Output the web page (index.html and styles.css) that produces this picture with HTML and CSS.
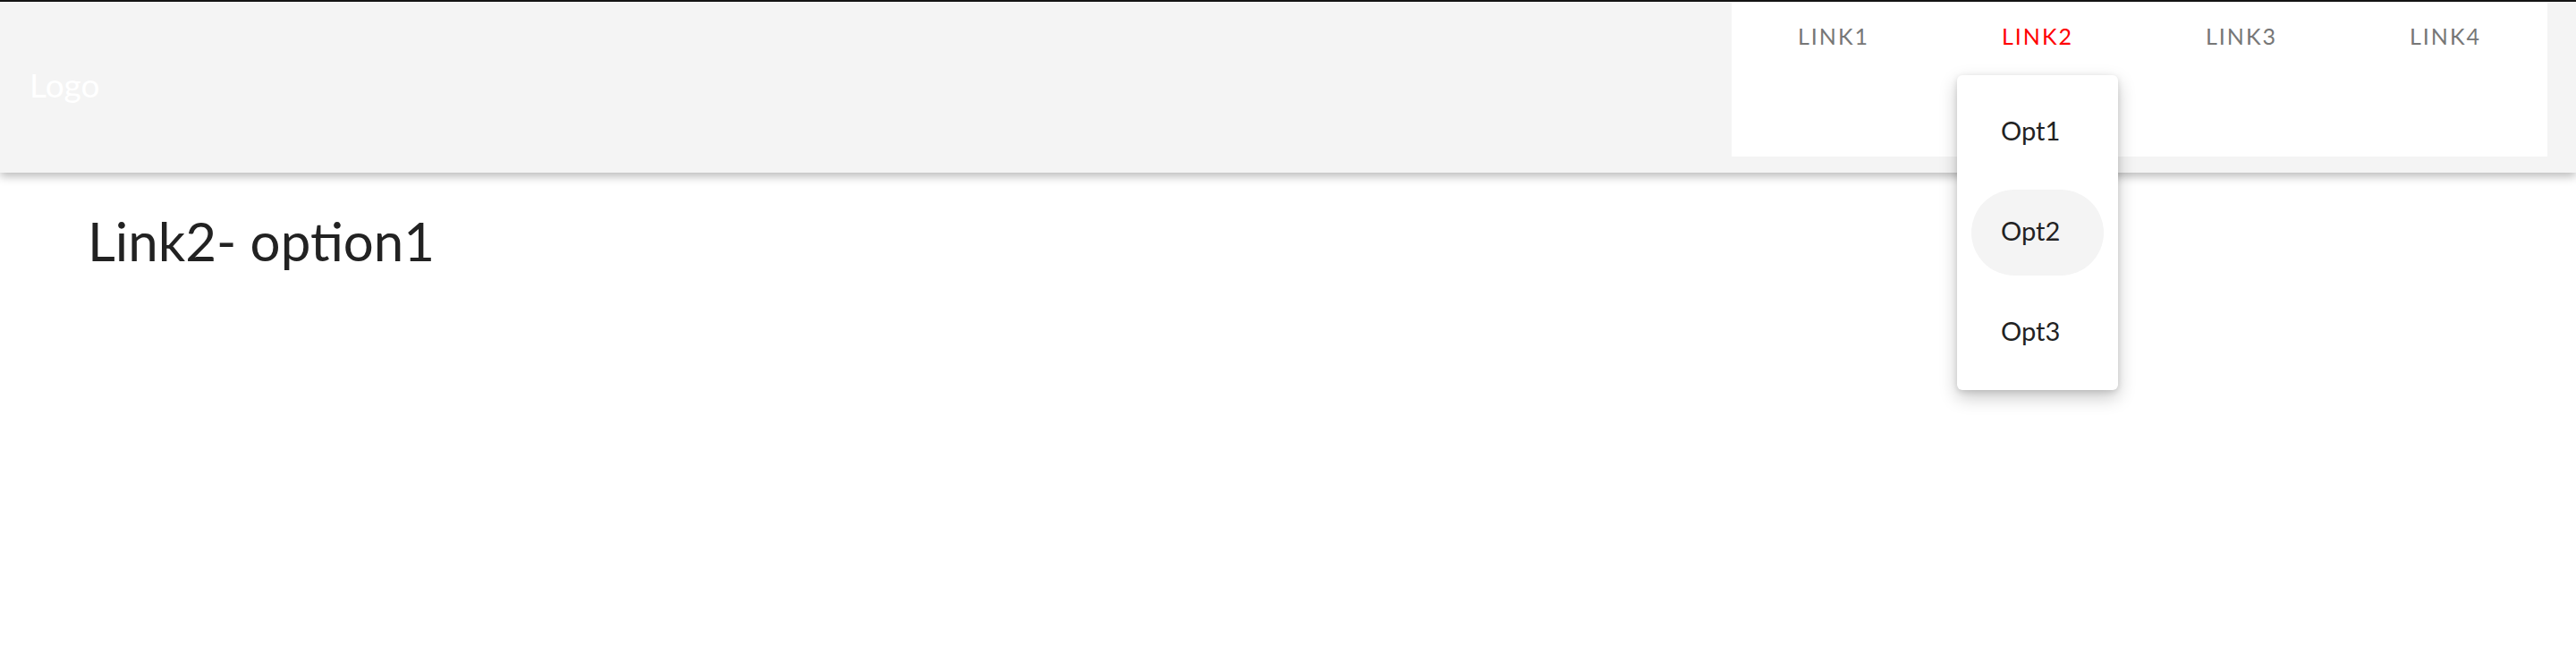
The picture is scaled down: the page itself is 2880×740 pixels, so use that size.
FILE: index.html
```html
<!DOCTYPE html>
<html lang="en">
<head>
    <meta charset="UTF-8">
    <meta name="viewport" content="width=device-width, initial-scale=1.0">
    <title>Navbar</title>
    <link rel="stylesheet" href="styles.css">
</head>
<body>
    <div class="header">
        <div class="logo">Logo</div>
        <div class="nav">
            <div class="nav-item"><span class="nav-link">Link1</span></div>
            <div class="nav-item open">
                <span class="nav-link active">Link2</span>
                <!-- dropdown for link2 -->
                <div class="menu">
                    <div class="menu-item"><span class="menu-pill">Opt1</span></div>
                    <div class="menu-item"><span class="menu-pill hovered">Opt2</span></div>
                    <div class="menu-item"><span class="menu-pill">Opt3</span></div>
                </div>
            </div>
            <div class="nav-item"><span class="nav-link">Link3</span></div>
            <div class="nav-item"><span class="nav-link">Link4</span></div>
        </div>
    </div>
    <div class="content">
        <h1 class="page-title">Link2- option1</h1>
    </div>
</body>
</html>
```

FILE: styles.css
```css
html{
    height: 100%;
}
body{
    margin: 0;
    min-height: calc(100% - 2px);
    border-top: 2px solid #141414;
    background-color: white;
    font-family: Lato, "Open Sans", sans-serif;
    color: #222222;
}
.header{
    display: flex;
    justify-content: space-between;
    align-items: flex-start;
    height: 191px;
    background-color: #f4f4f4;
    box-shadow: 0 4px 10px rgba(0, 0, 0, 0.28);
    position: relative;
    z-index: 1;
}
.logo{
    align-self: center;
    padding-left: 33px;
    color: white;
    font-size: 37px;
    margin-top: -6px;
}
.nav{
    display: grid;
    grid-template-columns: repeat(4, 228px);
    height: 173px;
    margin-right: 32px;
    background-color: white;
}
.nav-item{
    position: relative;
    text-align: center;
    padding-top: 18px;
}
.nav-link{
    font-size: 25px;
    line-height: 40px;
    letter-spacing: 2px;
    text-transform: uppercase;
    color: #777777;
    cursor: pointer;
}
.nav-link.active{
    color: #ff0000;
}
.menu{
    position: absolute;
    top: 82px;
    left: 24px;
    width: 180px;
    padding: 8px 0;
    background-color: white;
    border-radius: 6px;
    box-shadow: 0 8px 20px rgba(0, 0, 0, 0.22), 0 2px 6px rgba(0, 0, 0, 0.12);
    text-align: left;
}
.menu-item{
    padding: 8px 16px;
}
.menu-pill{
    display: flex;
    align-items: center;
    height: 90px;
    padding: 0 0 6px 33px;
    border-radius: 48px;
    font-size: 29px;
    color: #222222;
    cursor: pointer;
}
.menu-pill.hovered{
    background-color: #f4f4f4;
}
.content{
    padding: 0 98px;
}
.page-title{
    margin: 40px 0 0;
    font-size: 60px;
    font-weight: normal;
    line-height: 72px;
}
```
